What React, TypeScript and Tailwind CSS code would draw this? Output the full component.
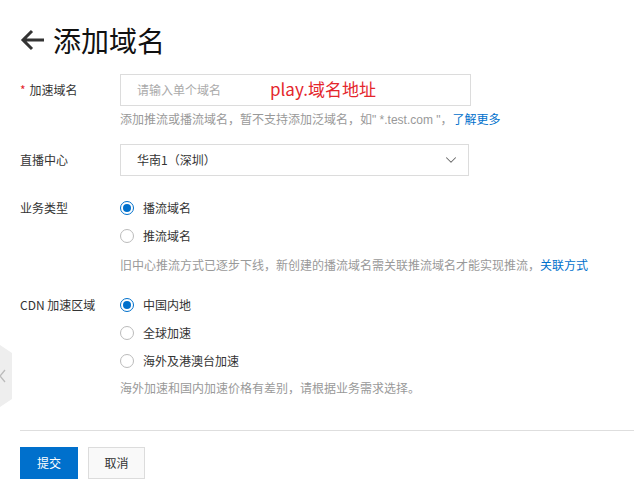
import { ChevronDown } from 'lucide-react'

const font = { fontFamily: '"Microsoft YaHei", "Noto Sans CJK SC", "Liberation Sans", sans-serif' }

function Radio({ checked, label }: { checked?: boolean; label: string }) {
  return (
    <label className="flex h-[28px] items-center gap-[9px] text-[12px] text-[#333]">
      <span
        className={`flex h-[14px] w-[14px] items-center justify-center rounded-full border bg-white ${
          checked ? 'border-[#0070cc]' : 'border-[#bbb]'
        }`}
      >
        {checked && <span className="h-[8px] w-[8px] rounded-full bg-[#0070cc]" />}
      </span>
      {label}
    </label>
  )
}

function Help({ children }: { children: React.ReactNode }) {
  return <div className="h-[18px] text-[12px] leading-[18px] text-[#999]">{children}</div>
}

export default function App() {
  return (
    <div className="relative h-[497px] w-[634px] overflow-hidden bg-white" style={font}>
      {/* side collapse tab */}
      <div className="absolute left-0 top-[345px] flex h-[62px] w-[12px] items-center bg-[#eeeeee] [clip-path:polygon(0_0,100%_8px,100%_calc(100%-8px),0_100%)]">
        <svg width="8" height="14" viewBox="0 0 8 14" className="-ml-[2px]">
          <path d="M7 1 L2 7 L7 13" fill="none" stroke="#bbb" strokeWidth="1.3" />
        </svg>
      </div>

      <div className="pl-5 pt-[20px]">
        {/* title */}
        <div className="flex h-[40px] items-center gap-[8px]">
          <svg width="25" height="24" viewBox="0 0 25 24">
            <path d="M24 12 H3 M12 3 L3 12 L12 21" fill="none" stroke="#333" strokeWidth="3" />
          </svg>
          <h1 className="text-[28px] leading-none text-[#111]">添加域名</h1>
        </div>

        {/* 加速域名 */}
        <div className="mt-[14px] flex">
          <div className="flex h-[32px] w-[100px] items-center text-[12px] text-[#333]">
            <span className="mr-[4px] text-[#e4262c]">*</span>加速域名
          </div>
          <div>
            <div className="relative flex h-[32px] w-[351px] items-center border border-[#dcdcdc] px-[16px] text-[12px] text-[#aaa]">
              请输入单个域名
              <span className="absolute left-[149px] top-[1px] text-[17px] text-[#e4262c]">play.域名地址</span>
            </div>
            <div className="mt-[4px]">
              <Help>
                添加推流或播流域名，暂不支持添加泛域名，如
                <span className="font-['Liberation_Sans']">" *.test.com "</span>，
                <span className="text-[#0070cc]">了解更多</span>
              </Help>
            </div>
          </div>
        </div>

        {/* 直播中心 */}
        <div className="mt-[16px] flex">
          <div className="flex h-[32px] w-[100px] items-center text-[12px] text-[#333]">直播中心</div>
          <div className="flex h-[32px] w-[349px] items-center justify-between border border-[#dcdcdc] pl-[16px] pr-[8px] text-[12px] text-[#333]">
            华南1（深圳）
            <ChevronDown size={18} strokeWidth={1.4} color="#666" />
          </div>
        </div>

        {/* 业务类型 */}
        <div className="mt-[18px] flex">
          <div className="flex h-[28px] w-[100px] items-center text-[12px] text-[#333]">业务类型</div>
          <div>
            <Radio checked label="播流域名" />
            <Radio label="推流域名" />
            <div className="mt-[6px]">
              <Help>
                旧中心推流方式已逐步下线，新创建的播流域名需关联推流域名才能实现推流，
                <span className="text-[#0070cc]">关联方式</span>
              </Help>
            </div>
          </div>
        </div>

        {/* CDN 加速区域 */}
        <div className="mt-[17px] flex">
          <div className="flex h-[28px] w-[100px] items-center text-[12px] text-[#333]">CDN 加速区域</div>
          <div>
            <Radio checked label="中国内地" />
            <Radio label="全球加速" />
            <Radio label="海外及港澳台加速" />
            <div className="mt-[4px]">
              <Help>海外加速和国内加速价格有差别，请根据业务需求选择。</Help>
            </div>
          </div>
        </div>

        <div className="mt-[33px] border-t border-[#dedede]" />

        <div className="mt-[16px] flex gap-[10px]">
          <button className="h-[32px] w-[58px] bg-[#0070cc] text-[12px] text-white">提交</button>
          <button className="h-[32px] w-[57px] border border-[#dcdcdc] bg-[#f9f9f9] text-[12px] text-[#333]">取消</button>
        </div>
      </div>
    </div>
  )
}
